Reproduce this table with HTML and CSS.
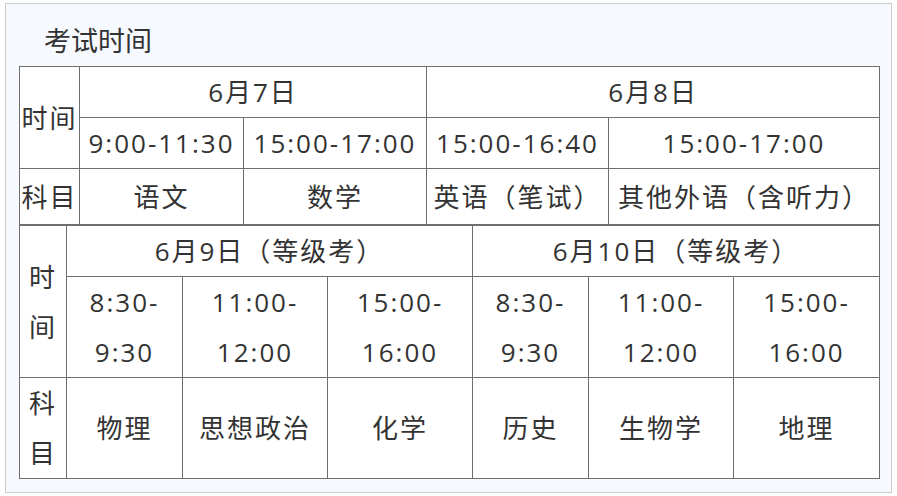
FILE: index.html
```html
<!DOCTYPE html>
<html lang="zh-CN">
<head>
<meta charset="utf-8">
<title>考试时间</title>
<link rel="stylesheet" href="styles.css">
</head>
<body>
<div class="panel">
  <h2 class="title">考试时间</h2>
  <table class="grid grid-a">
    <colgroup>
      <col class="a0"><col class="a1"><col class="a2"><col class="a3"><col class="a4">
    </colgroup>
    <tr class="r-date">
      <td rowspan="2">时间</td>
      <td colspan="2">6月7日</td>
      <td colspan="2">6月8日</td>
    </tr>
    <tr class="r-time">
      <td>9:00-11:30</td>
      <td>15:00-17:00</td>
      <td>15:00-16:40</td>
      <td>15:00-17:00</td>
    </tr>
    <tr class="r-subj">
      <td>科目</td>
      <td>语文</td>
      <td>数学</td>
      <td>英语（笔试）</td>
      <td>其他外语（含听力）</td>
    </tr>
  </table>
  <table class="grid grid-b">
    <colgroup>
      <col class="b0"><col class="b1"><col class="b2"><col class="b3"><col class="b4"><col class="b5"><col class="b6">
    </colgroup>
    <tr class="r-date">
      <td rowspan="2" class="narrow">时间</td>
      <td colspan="3">6月9日（等级考）</td>
      <td colspan="3">6月10日（等级考）</td>
    </tr>
    <tr class="r-tall">
      <td>8:30-<br>9:30</td>
      <td>11:00-<br>12:00</td>
      <td>15:00-<br>16:00</td>
      <td>8:30-<br>9:30</td>
      <td>11:00-<br>12:00</td>
      <td>15:00-<br>16:00</td>
    </tr>
    <tr class="r-tall">
      <td class="narrow">科目</td>
      <td>物理</td>
      <td>思想政治</td>
      <td>化学</td>
      <td>历史</td>
      <td>生物学</td>
      <td>地理</td>
    </tr>
  </table>
</div>
</body>
</html>
```
FILE: styles.css
```css
html, body {
  margin: 0;
  padding: 0;
  background: #ffffff;
}
body {
  font-family: "Open Sans", "Noto Sans CJK SC", sans-serif;
  color: #333333;
}
.panel {
  margin: 3px 5px 0 5px;
  border: 1px solid #cccccc;
  background: #f6f9fe;
  padding: 16px 12px 13px 13px;
}
.title {
  margin: 0 0 6px 0;
  padding-left: 25px;
  font-family: "Noto Sans CJK SC", sans-serif;
  font-size: 27px;
  font-weight: normal;
  line-height: 40px;
  color: #333333;
}
.grid {
  width: 860px;
  table-layout: fixed;
  border-collapse: collapse;
  background: #ffffff;
}
.grid td {
  border: 1px solid #6f6f6f;
  padding: 0;
  text-align: center;
  vertical-align: middle;
  font-size: 26px;
  line-height: 50px;
  letter-spacing: 2px;
  white-space: nowrap;
  overflow: hidden;
}
.grid td.narrow {
  white-space: normal;
}
.a0 { width: 60px; }
.a1 { width: 164px; }
.a2 { width: 183px; }
.a3 { width: 182px; }
.a4 { width: 271px; }
.b0 { width: 47px; }
.b1 { width: 116px; }
.b2 { width: 145px; }
.b3 { width: 145px; }
.b4 { width: 116px; }
.b5 { width: 145px; }
.b6 { width: 146px; }
.grid-a .r-date, .grid-a .r-time { height: 51px; }
.grid-a .r-subj { height: 56px; }
.grid-b .r-date { height: 51px; }
.grid-b .r-tall { height: 101px; }
```
